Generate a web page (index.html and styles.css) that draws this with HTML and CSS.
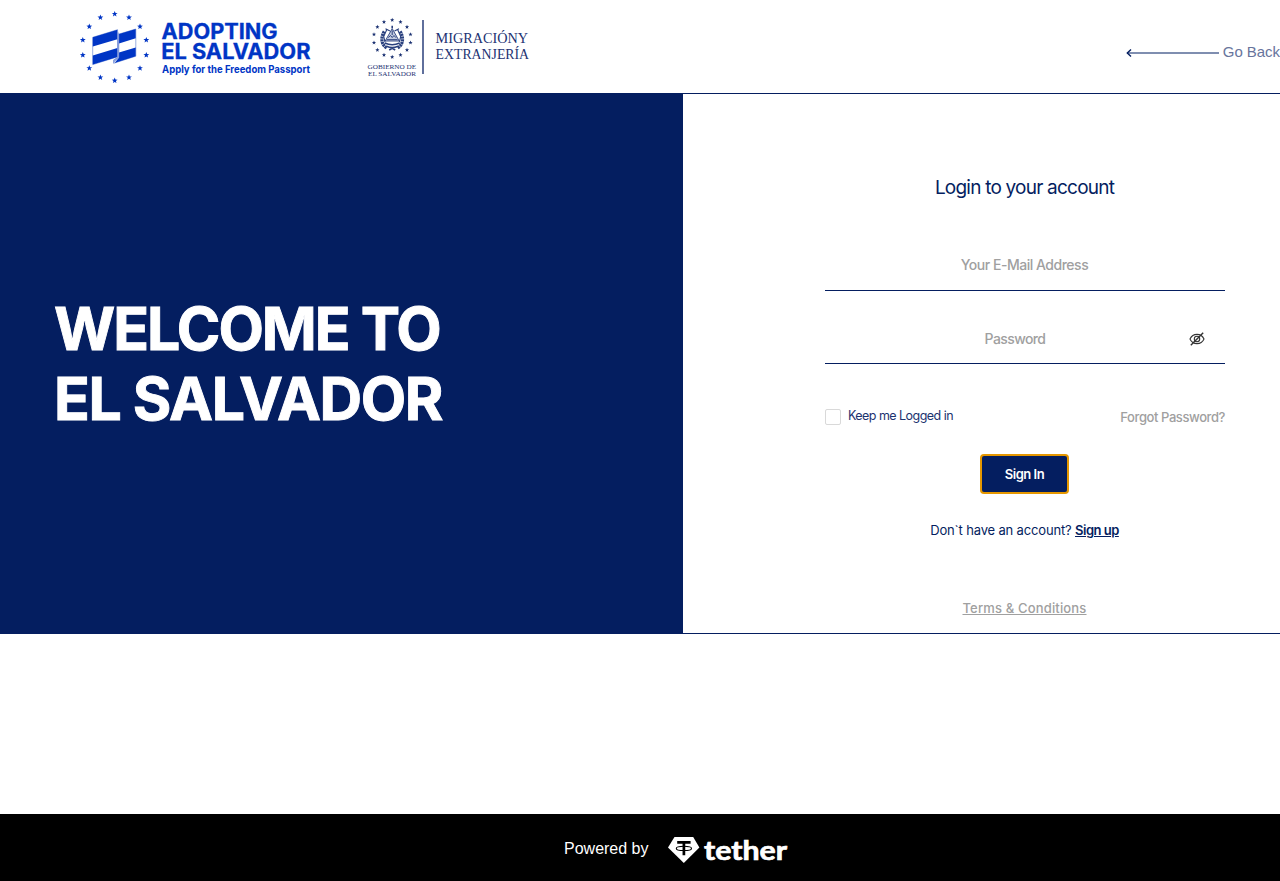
FILE: index.html
```html
<!DOCTYPE html>
<html lang="en">
<head>
<meta charset="utf-8">
<title>Adopting El Salvador – Login</title>
<link rel="stylesheet" href="styles.css">
</head>
<body>
<header class="header">
  <svg class="logo-adopting" width="232" height="76" viewBox="79 9 232 76" role="img">
    <defs>
      <path id="star" d="M0-3 .8-1 2.9-.9 1.2.4 1.8 2.5 0 1.3-1.8 2.5-1.2.4-2.9-.9-.8-1Z"/>
    </defs>
    <g fill="#0035c5">
      <use href="#star" x="114.7" y="13.9"/><use href="#star" x="129" y="17.5"/>
      <use href="#star" x="140" y="26.6"/><use href="#star" x="146.3" y="40"/>
      <use href="#star" x="146.3" y="55.1"/><use href="#star" x="140" y="68.2"/>
      <use href="#star" x="129" y="77.4"/><use href="#star" x="114.7" y="80.6"/>
      <use href="#star" x="100.4" y="77.4"/><use href="#star" x="89.3" y="68.2"/>
      <use href="#star" x="82.8" y="55.1"/><use href="#star" x="82.8" y="40"/>
      <use href="#star" x="89.3" y="26.6"/><use href="#star" x="100.4" y="17.5"/>
    </g>
    <path fill="#fff" stroke="#9aafe2" stroke-width="1" d="M92.7 37.3 117.6 29.7V56.8L92.7 64.6ZM118.6 34.2 135.8 29V56.2L113.6 63.3V60L118.6 57.5Z"/>
    <g fill="#0035c5">
      <path d="M92.8 37.3 117.4 29.8V39.2L92.8 46.5ZM92.8 55.5 117.4 48.1V57L92.8 64.6Z"/>
      <path d="M119 34.1 135.7 29.1V38.2L119 43.5ZM119 52.6 135.7 47.4V56.2L114.6 63.1 119 57.6Z"/>
    </g>
    <path fill="#7891d8" d="M117.2 29.8 119.2 34.2V57.6L113.4 63.3V60L117.2 57Z" opacity=".8"/>
    <g fill="#0035c5" font-family="Inter, sans-serif" font-weight="700">
      <text x="161.6" y="39.1" font-size="20.8" stroke="#0035c5" stroke-width=".3" textLength="116" lengthAdjust="spacingAndGlyphs">ADOPTING</text>
      <text x="161.2" y="59.1" font-size="20.8" stroke="#0035c5" stroke-width=".3" textLength="149.3" lengthAdjust="spacingAndGlyphs">EL SALVADOR</text>
      <text x="162" y="72.7" font-size="10.1" textLength="148" lengthAdjust="spacingAndGlyphs">Apply for the Freedom Passport</text>
    </g>
  </svg>
  <svg class="logo-migracion" width="166" height="62" viewBox="366 16 166 62" role="img">
    <defs><path id="star-s" d="M0-2.2.6-.7 2.1-.7.9.3 1.3 1.8 0 .9-1.3 1.8-.9.3-2.1-.7-.6-.7Z"/></defs>
    <g fill="#1c3272">
      <use href="#star-s" x="392.2" y="20"/><use href="#star-s" x="400.5" y="22"/>
      <use href="#star-s" x="407" y="27"/><use href="#star-s" x="410.5" y="34.4"/>
      <use href="#star-s" x="410.5" y="42.7"/><use href="#star-s" x="407" y="50"/>
      <use href="#star-s" x="400.5" y="55"/><use href="#star-s" x="392.2" y="57"/>
      <use href="#star-s" x="384" y="55"/><use href="#star-s" x="377.4" y="50"/>
      <use href="#star-s" x="374" y="42.7"/><use href="#star-s" x="374" y="34.4"/>
      <use href="#star-s" x="377.4" y="27"/><use href="#star-s" x="384" y="22"/>
    </g>
    <g fill="none" stroke="#2a407e">
      <path d="M392.2 28.6 399.2 41H385.2Z" fill="#c3cbdf" stroke-width=".9"/>
      <path d="M388.3 37.5 390.5 35.5 392.2 37.5 394 35.5 396 37.7M386.8 39.7H397.6M392.2 30.5V35" stroke-width="1"/>
      <path d="M384.3 31.5C380.5 37 381 45 387 48M400.1 31.5C403.9 37 403.4 45 397.4 48" stroke-width="3.2" stroke-dasharray="2.2 .5"/>
      <path d="M386.8 29.5 383.7 36.5 385 42M397.6 29.5 400.7 36.5 399.4 42M385.5 28.7 390 31M399 28.7 394.5 31" stroke-width="1.1"/>
      <path d="M384.7 43Q392.2 46.5 399.7 43M386.5 46.3Q392.2 49 398 46.3M389.2 50 392.2 48.3 395.2 50M392.2 25.8V28.3" stroke-width="1.6"/>
    </g>
    <path d="M423 20V74" stroke="#1c3272" stroke-width="1.4"/>
    <g fill="#1c3272" font-family="'Liberation Serif', serif">
      <text x="367.5" y="68.7" font-size="6.6" textLength="48.7" lengthAdjust="spacingAndGlyphs">GOBIERNO DE</text>
      <text x="368" y="75.7" font-size="6.6" textLength="48" lengthAdjust="spacingAndGlyphs">EL SALVADOR</text>
      <text x="435.6" y="43" font-size="13.6" textLength="92.5" lengthAdjust="spacingAndGlyphs">MIGRACIÓNY</text>
      <text x="435.6" y="59" font-size="13.6" textLength="93.5" lengthAdjust="spacingAndGlyphs">EXTRANJERÍA</text>
    </g>
  </svg>
  <a class="go-back">
    <svg width="93" height="10" viewBox="0 0 93 10" fill="none">
      <path d="M1 5H93" stroke="#7f8eb0" stroke-width="2"/>
      <path d="M5 1.5 1.3 5 5 8.5" stroke="#041e60" stroke-width="1.4"/>
    </svg>
    <span>Go Back</span>
  </a>
</header>
<main class="hero">
  <section class="welcome"><h1><span class="line-1">WELCOME TO</span><br><span class="line-2">EL SALVADOR</span></h1></section>
  <section class="login">
    <form class="form">
      <h2 class="title">Login to your account</h2>
      <div class="field email"><span class="placeholder">Your E-Mail Address</span></div>
      <div class="field password"><span class="placeholder">Password</span>
        <svg class="eye" width="16" height="16" viewBox="0 0 16 16" fill="none" stroke="#333" stroke-width="1.1">
          <path d="M1 8C3.8 1.8 12.2 1.8 15 8 12.2 14.2 3.8 14.2 1 8Z"/>
          <circle cx="8" cy="8" r="2.7"/><path d="M14.2 1.7 1.8 14.3" stroke-width="1.4"/>
        </svg>
      </div>
      <div class="options">
        <label class="keep"><span class="box"></span><span>Keep me Logged in</span></label>
        <a class="forgot">Forgot Password?</a>
      </div>
      <button class="sign-in" type="button">Sign In</button>
      <p class="account"><span class="ask">Don`t have an account?</span> <a class="sign-up">Sign up</a></p>
      <a class="terms">Terms &amp; Conditions</a>
    </form>
  </section>
</main>
<footer class="footer">
  <span class="powered">Powered by</span>
  <svg class="tether" width="122" height="30" viewBox="667 834 122 30" role="img">
    <path fill="#fff" d="M674.5 837H693.2L699.4 847.6 683.8 863 668 847.6Z"/>
    <path d="M677.2 842.3H690.6M683.9 842V855.3" stroke="#000" stroke-width="2.7"/>
    <ellipse cx="683.9" cy="848.4" rx="7.6" ry="2.1" fill="none" stroke="#000" stroke-width="1.1"/>
    <text x="704" y="859.7" fill="#fff" stroke="#fff" stroke-width=".7" font-family="Lato, sans-serif" font-weight="700" font-size="27.5" textLength="83" lengthAdjust="spacingAndGlyphs">tether</text>
  </svg>
</footer>
</body>
</html>
```

FILE: styles.css
```css
* { box-sizing: border-box; }
body {
  margin: 0;
  min-height: 881px;
  display: flex;
  flex-direction: column;
  overflow: hidden;
  background: #fff;
  color: #041e60;
  font-family: Inter, sans-serif;
}
svg { display: block; flex: none; overflow: visible; }
.header {
  height: 94px;
  display: flex;
  align-items: flex-start;
  padding-left: 79px;
  border-bottom: 1px solid #041e60;
}
.logo-adopting { margin-top: 9px; }
.logo-migracion { margin: 16px 0 0 55px; }
.go-back {
  display: flex;
  align-items: center;
  gap: 4px;
  margin: 43px 0 0 auto;
  font: 15px/18px "Liberation Sans", sans-serif;
  letter-spacing: -.05px;
  color: #68749c;
  white-space: nowrap;
}
.go-back svg { margin-top: 2px; }
.hero {
  height: 540px;
  display: flex;
  border-bottom: 1px solid #041e60;
}
.welcome {
  width: 683px;
  padding: 200px 0 0 54px;
  background: #041e60;
  color: #fff;
}
.welcome h1 {
  margin: 0;
  font-size: 59px;
  line-height: 70px;
  font-weight: 700;
  white-space: nowrap;
  -webkit-text-stroke: .9px #fff;
}
.line-1 { letter-spacing: -2px; }
.line-2 { letter-spacing: -1.45px; }
.login { padding-left: 142px; }
.form {
  width: 400px;
  display: flex;
  flex-direction: column;
  align-items: center;
  white-space: nowrap;
}
.title {
  margin: 82px 1px 0 0;
  font-size: 19px;
  line-height: 24px;
  font-weight: 400;
  letter-spacing: -.78px;
}
.field {
  width: 100%;
  position: relative;
  text-align: center;
  border-bottom: 1px solid #041e60;
  font-size: 14px;
  line-height: 20px;
  font-weight: 500;
  letter-spacing: -.48px;
  color: #a0a0a0;
}
.email { height: 52px; margin-top: 39px; padding: 16px 1px 0 0; }
.password { height: 52px; margin-top: 21px; padding: 17px 20px 0 0; letter-spacing: -.6px; }
.eye { position: absolute; right: 20px; top: 19px; }
.options {
  width: 100%;
  display: flex;
  justify-content: space-between;
  margin-top: 43px;
  height: 20px;
}
.keep { display: flex; gap: 7px; font-size: 12.5px; line-height: 18px; letter-spacing: -.54px; color: #1c336f; }
.box { width: 16px; height: 16px; margin-top: 2px; border: 1px solid #d9d9d9; border-radius: 2px; }
.forgot { font-size: 13px; line-height: 20px; font-weight: 500; letter-spacing: -.42px; color: #a0a0a0; }
.sign-in {
  width: 89px;
  height: 40px;
  margin: 27px 1px 0 0;
  padding: 0;
  border: 2px solid #e59700;
  border-radius: 4px;
  background: #041e60;
  color: #fff;
  font: 600 13px/20px Inter, sans-serif;
  letter-spacing: -.5px;
}
.account { margin: 26px 1px 0 0; font-size: 13px; line-height: 20px; letter-spacing: -.2px; }
.ask { letter-spacing: -.16px; }
.sign-up { font-weight: 600; letter-spacing: -.5px; text-decoration: underline; }
.terms {
  margin: 58px 1px 0 0;
  font-size: 13px;
  line-height: 20px;
  font-weight: 500;
  letter-spacing: .16px;
  text-decoration: underline;
  color: #a0a0a0;
}
.footer {
  height: 67px;
  margin-top: auto;
  display: flex;
  padding: 20px 0 0 564px;
  background: #000;
  color: #fff;
}
.powered { width: 103px; padding-top: 1px; font: 16px/28px "Liberation Sans", sans-serif; }
```
